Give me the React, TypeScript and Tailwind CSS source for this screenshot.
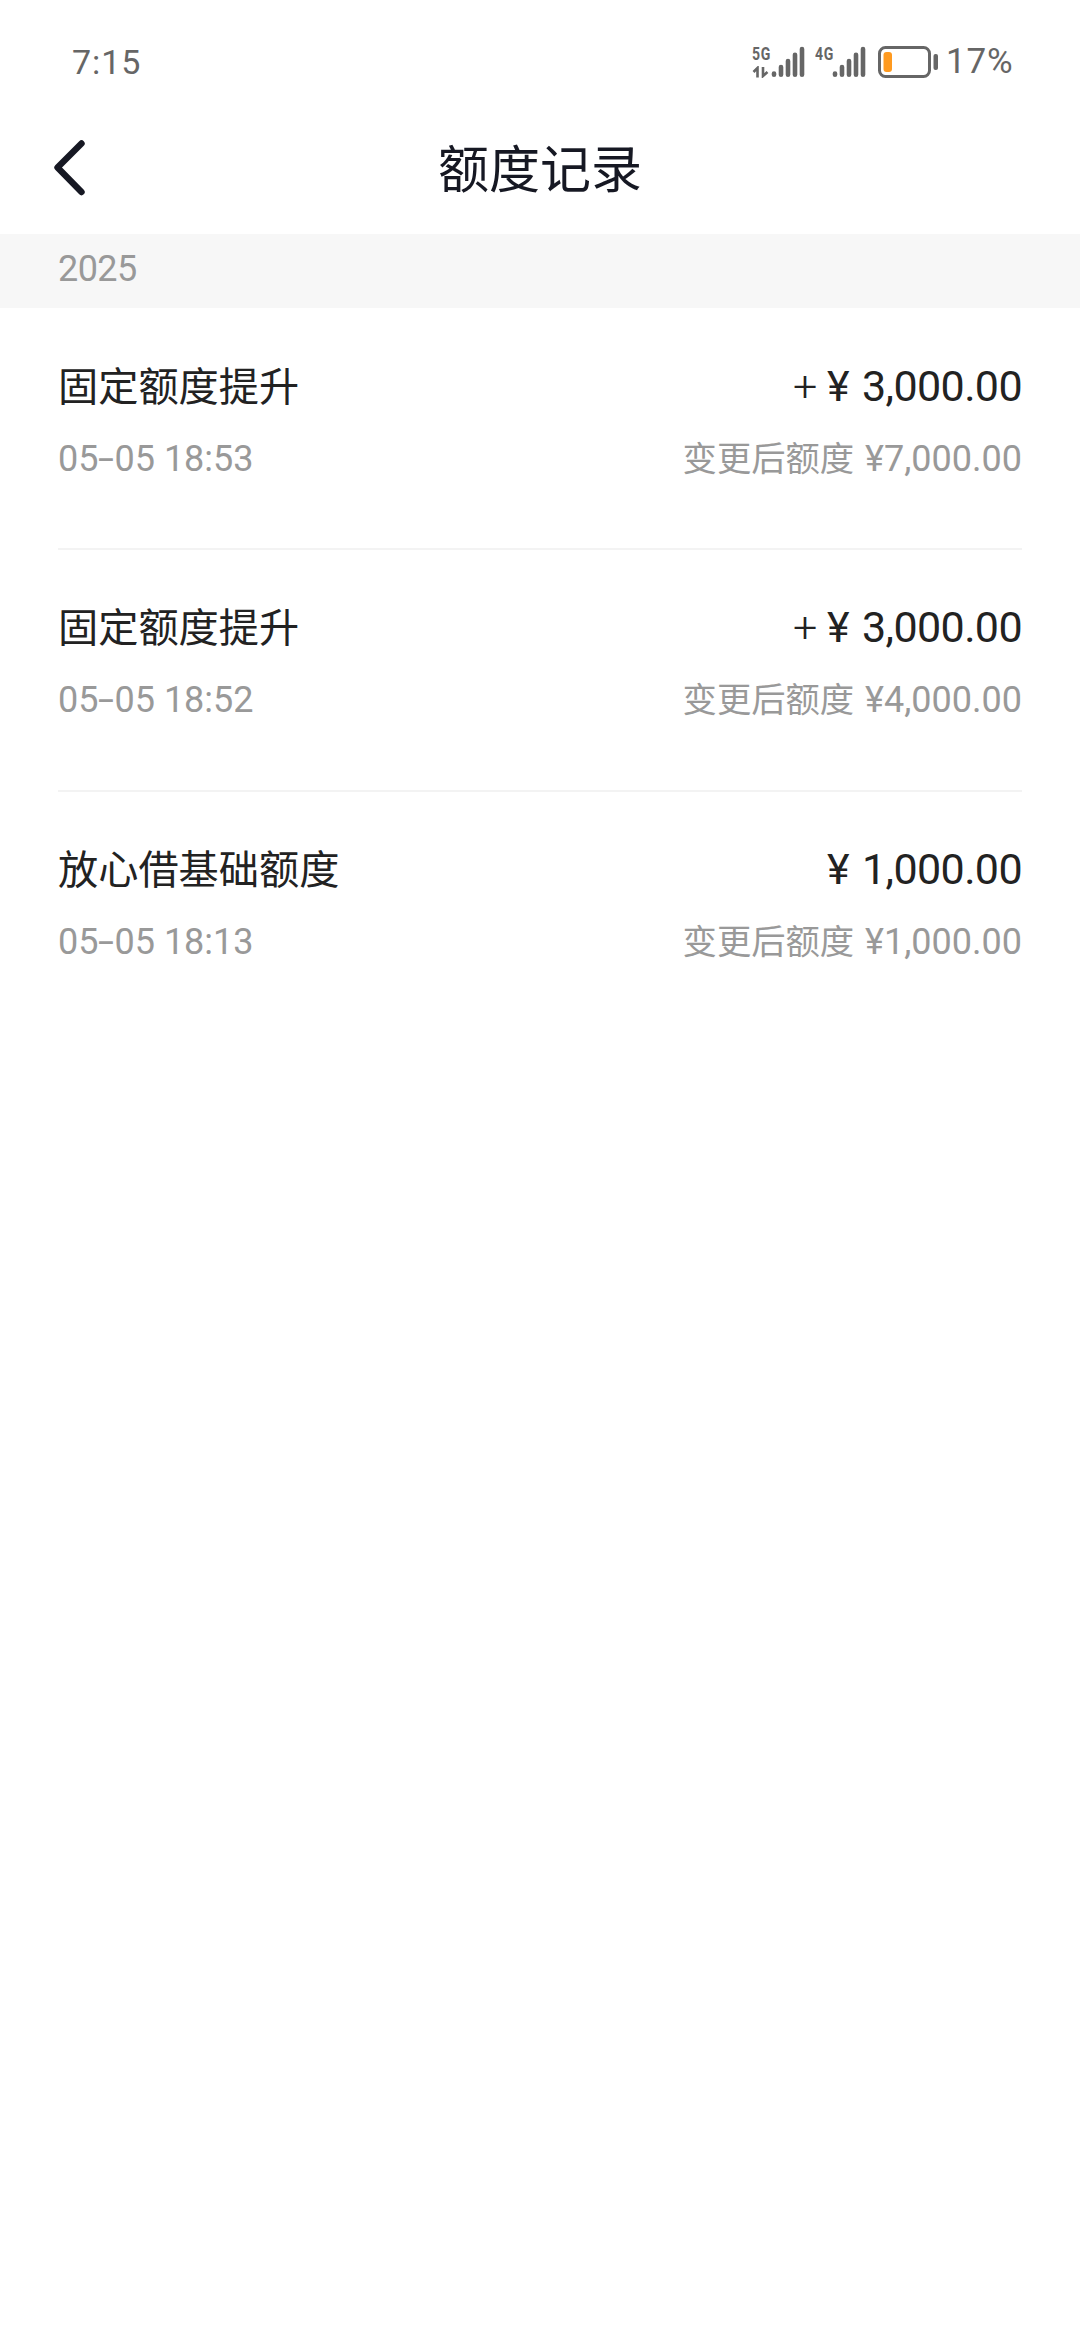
type RecordItem = {
  title: string
  date: [string, string]
  time: string
  sign?: string
  amount: string
  after: string
}

const records: RecordItem[] = [
  { title: '固定额度提升', date: ['05', '05'], time: '18:53', sign: '+', amount: '3,000.00', after: '7,000.00' },
  { title: '固定额度提升', date: ['05', '05'], time: '18:52', sign: '+', amount: '3,000.00', after: '4,000.00' },
  { title: '放心借基础额度', date: ['05', '05'], time: '18:13', amount: '1,000.00', after: '1,000.00' },
]

function SignalBars() {
  return (
    <svg width="34" height="32" viewBox="0 0 34 32" stroke="#666666" strokeWidth="4.6" strokeLinecap="round">
      <path d="M3 27.5V28.8M10 21V28.8M17 15V28.8M24 8.8V28.8M31 3V28.8" />
    </svg>
  )
}

function StatusBar() {
  return (
    <header className="flex h-[123px] items-center justify-between pl-[72px] pr-[60px] text-[34px] leading-[40px] text-[#666666]">
      <span className="tracking-[0.9px]">7:15</span>
      <div className="flex items-center">
        {/* 5G */}
        <div className="flex h-8 w-[19px] flex-col justify-between">
          <span className="origin-left scale-x-[0.78] text-[18px] font-bold leading-[15px] tracking-[0.8px]">5G</span>
          <svg width="18" height="12" viewBox="0 0 18 12" fill="none" stroke="#666666" strokeWidth="2.6">
            <path d="M1.5 6L5.5 2V11.5M11 1V10L15.5 6" />
          </svg>
        </div>
        <SignalBars />
        {/* 4G */}
        <span className="ml-[10px] h-8 w-[17px] text-[18px] font-bold leading-[15px]">
          <span className="inline-block origin-left scale-x-[0.78] tracking-[0.8px]">4G</span>
        </span>
        <SignalBars />
        {/* Bateria */}
        <svg className="ml-3" width="60" height="32" viewBox="0 0 60 32" fill="none">
          <rect x="1.5" y="1.5" width="50" height="29" rx="6" stroke="#666666" strokeWidth="3" />
          <rect x="5.5" y="6" width="8.5" height="20" rx="3" fill="#FF9A1F" />
          <rect x="55.5" y="8" width="4.5" height="16" rx="2" fill="#666666" />
        </svg>
        <span className="ml-2 w-[74px] whitespace-nowrap text-[35px] tracking-[0.8px]">17%</span>
      </div>
    </header>
  )
}

function RecordRow({ title, date, time, sign, amount, after }: RecordItem) {
  return (
    <li className="mx-[58px] h-[241.33px] border-b-2 border-[#f3f3f3] pt-[49px] last:border-b-0">
      <div className="flex h-[60px] items-start justify-between text-[#222222]">
        <span className="text-[40.2px] leading-[60px]">{title}</span>
        <div className="flex text-[43px] leading-[57px]">
          {sign && <span className="w-[34px] text-[43px] font-light">{sign}</span>}
          <span className="w-[35px]">¥</span>
          <span className="tracking-[-0.6px]">{amount}</span>
        </div>
      </div>
      <div className="mt-4 flex items-center justify-between text-[36px] leading-[50px] text-[#999999]">
        <span>
          {date[0]}
          <span className="inline-block w-4 scale-x-[1.6] text-center">-</span>
          {date[1]} {time}
        </span>
        <div className="flex items-baseline">
          <span className="mr-[11px] text-[34.3px]">变更后额度</span>
          <span>¥{after}</span>
        </div>
      </div>
    </li>
  )
}

export default function App() {
  return (
    <div className="min-h-[2340px] w-full bg-white font-[Roboto,'Noto_Sans_CJK_SC',sans-serif]">
      <StatusBar />
      <nav className="grid h-[111px] grid-cols-3 px-[52px]">
        <button type="button" aria-label="返回" className="mt-[16px] h-[58px] w-[36px]">
          <svg width="36" height="58" viewBox="0 0 36 58" fill="none" stroke="#161823" strokeWidth="6.4" strokeLinecap="round" strokeLinejoin="round">
            <path d="M29.5 4.5L5.5 28.5L29.5 53" />
          </svg>
        </button>
        <h1 className="text-center text-[51px] leading-[95px] text-[#161823]">额度记录</h1>
      </nav>
      <div className="h-[74px] bg-[#f7f7f7] pl-[58px] text-[36px] leading-[71px] tracking-[-0.6px] text-[#999999]">2025</div>
      <ul className="pt-px">
        {records.map((item) => (
          <RecordRow key={item.time} {...item} />
        ))}
      </ul>
    </div>
  )
}
